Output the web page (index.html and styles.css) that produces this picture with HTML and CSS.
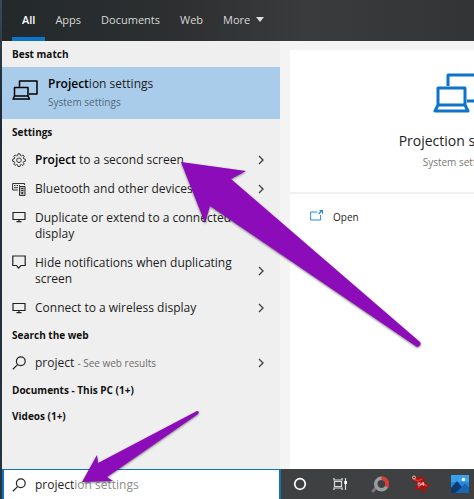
FILE: index.html
```
<!DOCTYPE html>
<html lang="en">
<head>
<meta charset="utf-8">
<title>Search</title>
<link rel="stylesheet" href="styles.css">
</head>
<body>
<svg class="symbols" aria-hidden="true">
  <symbol id="chevron" viewBox="0 0 6 10"><path d="M1 1l4 4-4 4" fill="none" stroke="#444" stroke-width="1.4"/></symbol>
  <symbol id="lens" viewBox="0 0 14 14"><path d="M5.6 8.6L.8 13.2" fill="none" stroke="#222" stroke-width="1.2"/><circle cx="8.8" cy="5.2" r="4.4" fill="none" stroke="#222" stroke-width="1.2"/></symbol>
  <symbol id="monitor" viewBox="0 0 14 12"><path d="M1 1.5h12v7H1zM7 8.5v2M4.5 10.7h5" fill="none" stroke="#222" stroke-width="1.2"/></symbol>
  <symbol id="project" viewBox="0 0 52 40"><path d="M15 13V2h35v26H34M5 15h27v17H5zM5 32l-3 6h33l-3-6" fill="none" stroke="currentColor" stroke-width="3" stroke-linejoin="round"/></symbol>
</svg>
<div class="screen">
  <div class="search">
    <nav class="tabs">
      <a class="tab active" href="#">All</a>
      <a class="tab" href="#">Apps</a>
      <a class="tab" href="#">Documents</a>
      <a class="tab" href="#">Web</a>
      <a class="tab" href="#">More <svg class="caret" viewBox="0 0 8 5"><path d="M0 0h8L4 5z" fill="#ddd"/></svg></a>
    </nav>
    <main class="body">
      <section class="results">
        <h2 class="heading">Best match</h2>
        <a class="best" href="#">
          <svg class="best-icon"><use href="#project"/></svg>
          <span><span class="best-title"><b>Project</b>ion settings</span><span class="best-sub">System settings</span></span>
        </a>
        <h2 class="heading">Settings</h2>
        <a class="row" href="#">
          <svg class="icon" viewBox="0 0 14 14"><path d="M6 .8h2l.4 1.7 1 .4 1.5-.9 1.3 1.3-.9 1.5.4 1 1.7.4v2l-1.7.4-.4 1 .9 1.5-1.3 1.3-1.5-.9-1 .4L8 13.600H6l-.4-1.700-1-.4-1.500.9-1.300-1.300.9-1.500-.4-1L.6 8.200v-2l1.700-.4.4-1-.9-1.500L3.100 2l1.500.9 1-.4z" fill="none" stroke="#333"/><circle cx="7" cy="7.200" r="2.300" fill="none" stroke="#333"/></svg>
          <span class="label"><b>Project</b> to a second screen</span><svg class="chevron"><use href="#chevron"/></svg>
        </a>
        <a class="row" href="#">
          <svg class="icon" viewBox="0 0 14 14"><path d="M6 8H.6V1.500h12V3M2 3.500h1.500M4.500 3.500H6M7 3.500h1M2 5.700h4" fill="none" stroke="#333"/><path d="M7.500 4.500h5.500v9H7.500zM9 6.500h2.500M9 8.500h2.500" fill="#bbb" stroke="#333"/><circle cx="10.250" cy="11" r="1" fill="#222"/></svg>
          <span class="label">Bluetooth and other devices settings</span><svg class="chevron"><use href="#chevron"/></svg>
        </a>
        <a class="row double" href="#">
          <svg class="icon top"><use href="#monitor"/></svg>
          <span class="label">Duplicate or extend to a connected display</span><svg class="chevron"><use href="#chevron"/></svg>
        </a>
        <a class="row double" href="#">
          <svg class="icon top" viewBox="0 0 14 14"><path d="M.8 1h12.400v9.500H9L6.500 13 4.500 10.500H.8z" fill="none" stroke="#222" stroke-width="1.200"/></svg>
          <span class="label">Hide notifications when duplicating screen</span><svg class="chevron"><use href="#chevron"/></svg>
        </a>
        <a class="row" href="#">
          <svg class="icon"><use href="#monitor"/></svg>
          <span class="label">Connect to a wireless display</span><svg class="chevron"><use href="#chevron"/></svg>
        </a>
        <h2 class="heading">Search the web</h2>
        <a class="row" href="#">
          <svg class="icon"><use href="#lens"/></svg>
          <span class="label">project <small>- See web results</small></span><svg class="chevron"><use href="#chevron"/></svg>
        </a>
        <h2 class="heading">Documents - This PC (1+)</h2>
        <h2 class="heading">Videos (1+)</h2>
      </section>
      <section class="preview">
        <div class="hero">
          <svg class="hero-icon"><use href="#project"/></svg>
          <h1 class="hero-title">Projection settings</h1>
          <p class="hero-sub">System settings</p>
        </div>
        <button class="open" type="button">
          <svg class="open-icon" viewBox="0 0 13 11"><path d="M7.500 2H.6v8h10V5" fill="none" stroke="#2b88d8"/><path d="M8.500 4L12 .800M9.500.700h3v3" fill="none" stroke="#2b88d8" stroke-width="1.200"/></svg>
          Open
        </button>
      </section>
    </main>
  </div>
  <footer class="taskbar">
    <label class="box">
      <svg class="icon"><use href="#lens"/></svg>
      <input class="query" type="text" value="project" aria-label="Search"><span class="ghost">ion settings</span>
    </label>
    <div class="apps">
      <button class="app" type="button" aria-label="Cortana"><svg viewBox="0 0 20 20"><circle cx="10" cy="10" r="5.300" fill="none" stroke="#fff" stroke-width="1.700"/></svg></button>
      <button class="app" type="button" aria-label="Task view"><svg viewBox="0 0 20 20"><path d="M4 4v2h8V4M4 16v-2h8v2M4.500 7.500h7v5h-7zM15.500 4v12" fill="none" stroke="#ddd" stroke-width="1.200"/><path d="M14.300 7h2.700v3h-2.700z" fill="#fff"/></svg></button>
      <button class="app" type="button" aria-label="Image viewer"><svg viewBox="0 0 20 20"><path d="M6 14l-3 3" stroke="#777" stroke-width="3" stroke-linecap="round"/><circle cx="11.500" cy="10" r="5.800" fill="none" stroke="#9a9da2" stroke-width="3.500"/><path d="M11.500 4.200a5.800 5.800 0 0 1 5 8.700" fill="none" stroke="#e33a2b" stroke-width="3.500"/></svg></button>
      <button class="app" type="button" aria-label="System monitor"><svg viewBox="0 0 20 20"><path d="M2 3l4-1 3 2 4-2 2 4-1 3 5 1v3l-4 .5 1 4-3 1-3-4-4 2-1-3 2-3-1-3-4-1z" fill="#a31414"/><path d="M4 5l4 2 4-2M8 14l4-5 5 3" fill="none" stroke="#e0352c" stroke-width="1.500"/><circle cx="4" cy="3.500" r="1.500" fill="none" stroke="#ccc"/><text x="7.500" y="12" class="badge">64</text></svg></button>
      <button class="app" type="button" aria-label="Photos"><svg viewBox="0 0 20 20"><path d="M1 1h18v18H1z" fill="#2586dd"/><path d="M1 1h18v7H1z" fill="#37a1ee"/><path d="M1 14l6-7 5 6 3-3 4 4v5H1z" fill="#0d396f"/><path d="M5 19l10-9 4 4v5z" fill="#1865b3"/><circle cx="13.500" cy="5.500" r="1.800" fill="#fff"/></svg></button>
    </div>
  </footer>
  <svg class="arrows" viewBox="0 0 474 499" aria-hidden="true">
    <path d="M181 162L246 171 231 179 420 342Q422 346 417 347L210 206 205 223Z"/>
    <path d="M82 482L97 455 98 463 197 411Q200 411 198 414L107 477 113 481Z"/>
  </svg>
</div>
</body>
</html>
```
FILE: styles.css
```
* { box-sizing: border-box; }
body {
  margin: 0;
  font-family: "Open Sans", "Noto Sans", sans-serif;
  font-size: 12px;
  line-height: 16px;
  color: #1d1d1d;
  overflow: hidden;
}
a { color: inherit; text-decoration: none; }
b { font-weight: 600; color: #000; }
button { border: 0; background: none; font: inherit; color: inherit; padding: 0; }
.symbols { display: none; }
.screen {
  position: relative;
  display: flex;
  flex-direction: column;
  min-height: 100vh;
  background: linear-gradient(#3a4b58, #202a36 20%, #26343f);
  padding-left: 2px;
  overflow: hidden;
}
.search { flex: 1; display: flex; flex-direction: column; }
.tabs {
  display: flex;
  height: 41px;
  padding-left: 10px;
  background: linear-gradient(90deg, #23292b, #2e3031 40%, #3a3b3d 65%, #333435);
  color: #d8d8d8;
  font-size: 11px;
}
.tab { padding: 12px 10px 0; border-bottom: 4px solid transparent; white-space: nowrap; }
.tab.active { color: #fff; font-weight: 600; border-color: #0a74cf; }
.caret { width: 8px; height: 5px; margin: 0 0 2px 3px; }
.body { flex: 1; display: flex; background: #f4f4f4; }
.results { flex: 0 0 278px; background: #efefef; }
.heading {
  margin: 0;
  padding: 5px 10px;
  font-size: 10px;
  line-height: 16px;
  font-weight: 700;
  color: #111;
}
.best {
  display: flex;
  gap: 10px;
  height: 52px;
  padding: 9px 10px;
  background: #a8ccea;
}
.best-icon { width: 26px; height: 20px; margin-top: 4px; color: #000; }
.best-title { display: block; line-height: 16px; }
.best-sub { display: block; font-size: 10px; line-height: 20px; color: #54687a; }
.row { display: flex; align-items: center; gap: 9px; min-height: 29px; padding: 0 16px 0 10px; }
.double { min-height: 45px; }
.icon { flex: none; width: 14px; height: 14px; }
.icon.top { align-self: flex-start; margin-top: 7px; }
.label { flex: 1; }
.label small { font-size: 10px; color: #6d6d6d; }
.chevron { flex: none; width: 6px; height: 10px; }
.preview { flex: 1; min-width: 0; margin: 9px 0 0 10px; background: #fff; overflow: hidden; }
.hero {
  display: flex;
  flex-direction: column;
  align-items: center;
  min-width: 338px;
  height: 144px;
  padding-top: 23px;
  border-bottom: 2px solid #f1f1f1;
}
.hero-icon { width: 52px; height: 40px; color: #0f73cc; }
.hero-title { margin: 18px 0 0; font-size: 14px; line-height: 20px; font-weight: 400; }
.hero-sub { margin: 3px 0 0; font-size: 10px; line-height: 16px; color: #777; }
.open { display: flex; align-items: center; gap: 10px; padding: 15px 20px; font-size: 10px; line-height: 16px; }
.open-icon { width: 13px; height: 11px; margin-bottom: 3px; }
.taskbar { display: flex; height: 30px; background: #3f4041; }
.box {
  flex: 0 0 279px;
  display: flex;
  align-items: center;
  padding-left: 8px;
  background: #fff;
  border: 2px solid #0e73b8;
  border-width: 1px 2px 0;
}
.query {
  field-sizing: content;
  margin-left: 9px;
  padding: 0;
  border: 0;
  outline: 0;
  background: none;
  font: inherit;
  color: #222;
}
.ghost { color: #8d8d8d; }
.apps { flex: 1; display: flex; gap: 20px; padding-left: 9px; overflow: hidden; }
.app { flex: none; display: flex; align-items: center; width: 20px; }
.app svg { width: 20px; height: 20px; }
.badge { font-size: 6px; fill: #fff; }
.arrows {
  position: absolute;
  top: 0;
  left: 0;
  width: 474px;
  height: 499px;
  fill: #8c0cb9;
  filter: drop-shadow(0 1px 1px rgba(0, 0, 0, .5));
  pointer-events: none;
}
```
